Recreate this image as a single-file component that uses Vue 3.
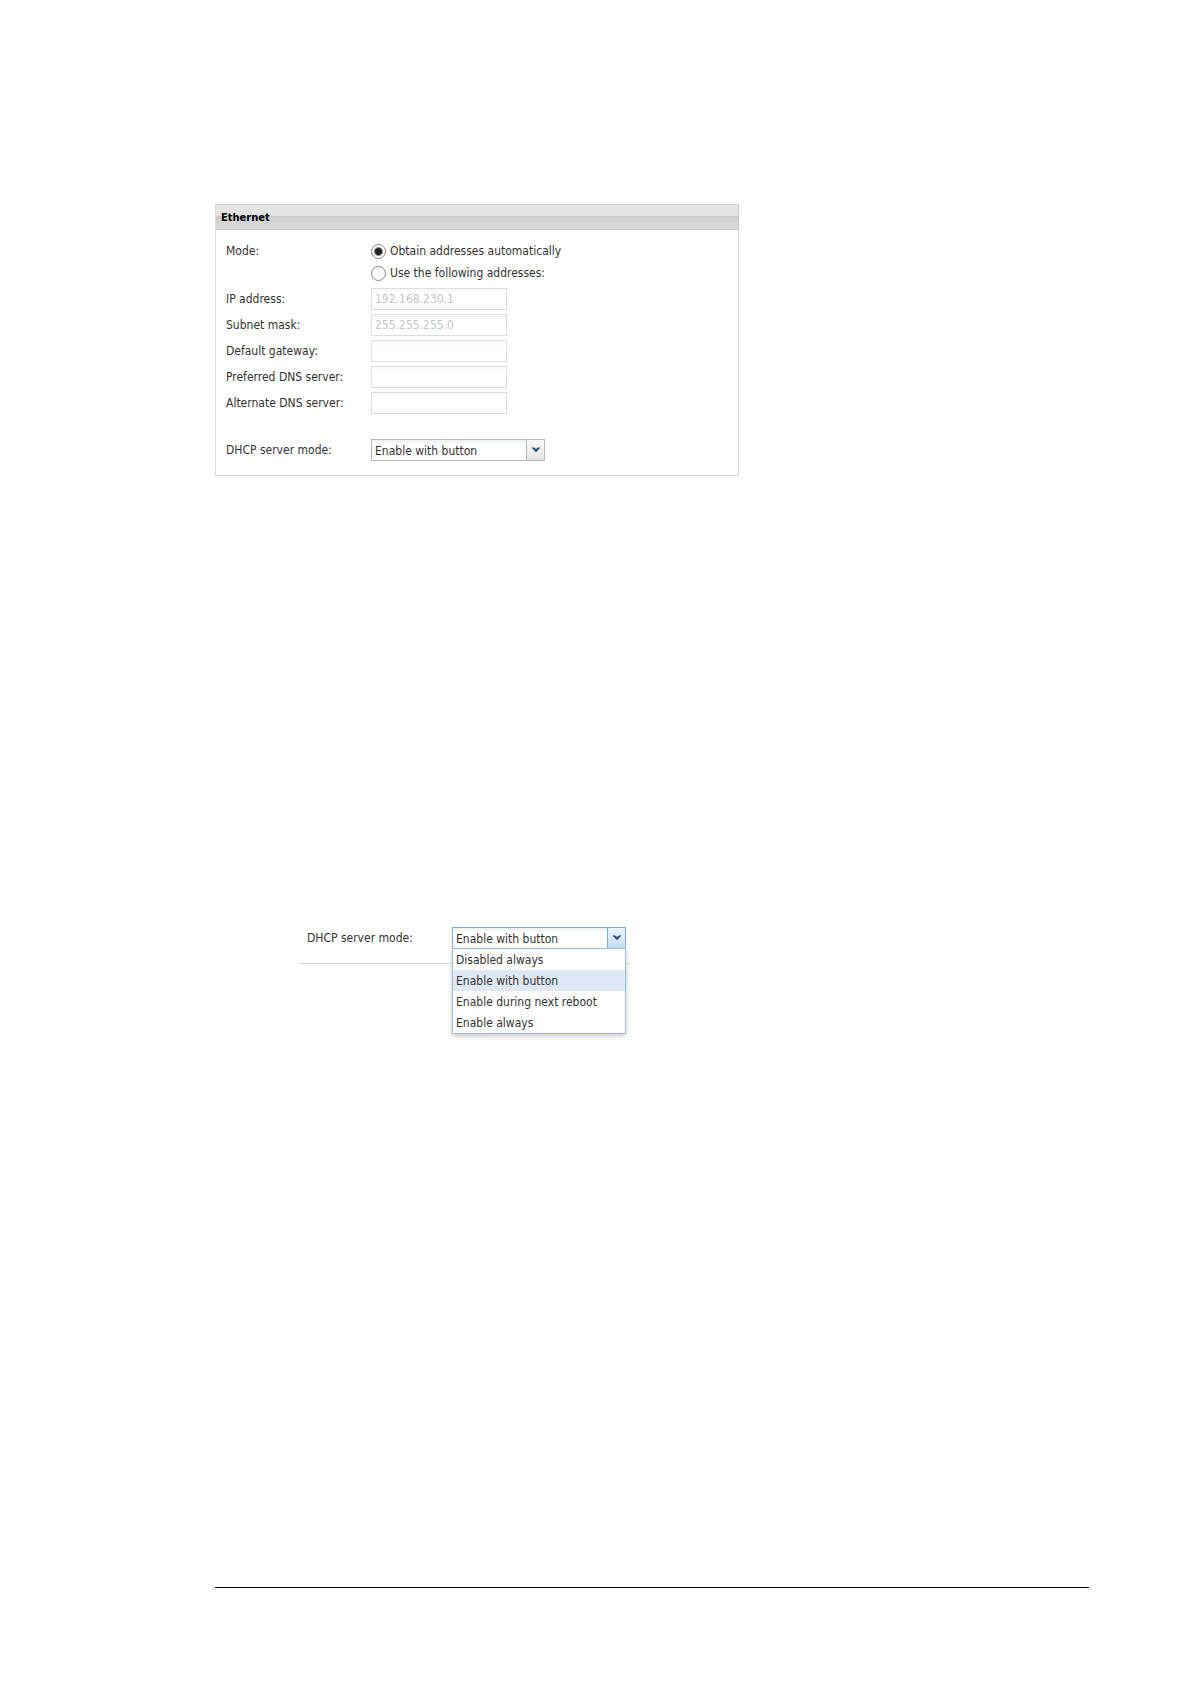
<script setup>
import { ref } from 'vue'

const mode = ref('auto')
const addresses = ref([
  { id: 'ip', label: 'IP address:', value: '192.168.230.1' },
  { id: 'mask', label: 'Subnet mask:', value: '255.255.255.0' },
  { id: 'gateway', label: 'Default gateway:', value: '' },
  { id: 'dns1', label: 'Preferred DNS server:', value: '' },
  { id: 'dns2', label: 'Alternate DNS server:', value: '' }
])
const options = ['Disabled always', 'Enable with button', 'Enable during next reboot', 'Enable always']
const dhcp = ref('Enable with button')
const dhcpOpen = ref('Enable with button')
</script>

<template>
  <main class="page">
    <section class="panel">
      <h2 class="panel-title">Ethernet</h2>
      <form class="form" @submit.prevent>
        <div class="row" role="radiogroup" aria-labelledby="mode-label">
          <span id="mode-label" class="caption">Mode:</span>
          <div class="radios">
            <label class="radio"><input v-model="mode" type="radio" name="mode" value="auto" />Obtain addresses automatically</label>
            <label class="radio"><input v-model="mode" type="radio" name="mode" value="manual" />Use the following addresses:</label>
          </div>
        </div>
        <div v-for="field in addresses" :key="field.id" class="row">
          <label class="caption" :for="field.id">{{ field.label }}</label>
          <input :id="field.id" v-model="field.value" class="text" type="text" :disabled="mode === 'auto'" />
        </div>
        <div class="row server">
          <label class="caption" for="dhcp">DHCP server mode:</label>
          <div class="combo">
            <select id="dhcp" v-model="dhcp">
              <option v-for="option in options" :key="option">{{ option }}</option>
            </select>
            <span class="trigger">
              <svg width="10" height="6" viewBox="0 0 10 6" aria-hidden="true"><path d="M0.5 0.5H3.3L5 2L6.7 0.5H9.5L5 5.3Z" /></svg>
            </span>
          </div>
        </div>
      </form>
    </section>

    <section class="detail">
      <div class="row">
        <label class="caption" for="dhcp-open">DHCP server mode:</label>
        <div class="combo open">
          <select id="dhcp-open" v-model="dhcpOpen">
            <option v-for="option in options" :key="option">{{ option }}</option>
          </select>
          <span class="trigger">
            <svg width="10" height="6" viewBox="0 0 10 6" aria-hidden="true"><path d="M0.5 0.5H3.3L5 2L6.7 0.5H9.5L5 5.3Z" /></svg>
          </span>
          <ul class="menu" role="listbox" aria-label="DHCP server mode">
            <li
              v-for="option in options"
              :key="option"
              role="option"
              :aria-selected="option === dhcpOpen"
              :class="{ selected: option === dhcpOpen }"
              @click="dhcpOpen = option"
            >{{ option }}</li>
          </ul>
        </div>
      </div>
    </section>

    <hr class="rule" />
  </main>
</template>

<style>
body {
  background: #fff;
}
</style>

<style scoped>
* {
  box-sizing: border-box;
}
.page {
  display: flex;
  flex-direction: column;
  min-height: 100vh;
  padding: 204px 101px 96px 215px;
  font: 12px/22px "DejaVu Sans Condensed", "DejaVu Sans", sans-serif;
  color: #333;
}
.panel {
  max-width: 524px;
  border: 1px solid #dcdcdc;
  border-top: 0;
}
.panel-title {
  height: 26px;
  margin: 0 -1px;
  padding: 0 5px;
  border: 1px solid #c8c8c8;
  border-left-color: #dcdcdc;
  background: linear-gradient(#f0f0f0 0, #e4e4e4 2px, #e3e3e3 11px, #c8c8c8 11px, #d2d2d2 14px, #dadada 100%);
  font-size: 11px;
  line-height: 26px;
  color: #000;
}
.form {
  display: flex;
  flex-direction: column;
  gap: 4px;
  padding: 10px 10px 14px;
}
.row {
  display: flex;
}
.caption {
  flex: 0 0 145px;
}
.radios {
  display: flex;
  flex-direction: column;
}
.radio {
  display: flex;
  align-items: center;
  gap: 4px;
}
.radio input {
  appearance: none;
  width: 15px;
  height: 15px;
  margin: 0;
  border: 1px solid #858585;
  border-radius: 50%;
  background: #fff;
}
.radio input:checked {
  background: radial-gradient(circle, #222 3px, #fff 5px);
}
.text {
  width: 136px;
  height: 22px;
  padding: 0 3px;
  border: 1px solid #dcdfe1;
  background: linear-gradient(#f5f7f8, #fff 5px);
  font: inherit;
  color: #333;
}
.text:disabled {
  color: #c4c6c8;
}
.server {
  margin-top: 21px;
}
.combo {
  position: relative;
  display: flex;
  flex: 0 0 174px;
  height: 22px;
  border: 1px solid #b5b8bb;
  background: linear-gradient(#eef2f3, #fff 5px);
}
.combo select {
  appearance: none;
  flex: 1;
  min-width: 0;
  padding: 0 3px;
  border: 0;
  background: transparent;
  font: inherit;
  color: #333;
}
.trigger {
  display: flex;
  align-items: center;
  justify-content: center;
  width: 18px;
  border-left: 1px solid #b5b8bb;
  background: linear-gradient(#f8f8f8, #e4e5e6);
  pointer-events: none;
}
.trigger path {
  fill: #304f78;
}
.detail {
  max-width: 332px;
  margin: 451px 0 0 83px;
  padding: 0 0 14px 9px;
  border-bottom: 1px solid #d8dadb;
}
.combo.open {
  border-color: #7eadd9;
}
.open .trigger {
  border-color: #7eadd9;
  background: linear-gradient(#e8f3fd, #c5def6);
}
.menu {
  position: absolute;
  top: 100%;
  left: -1px;
  right: -1px;
  margin: 0;
  padding: 0;
  border: 1px solid #98c0e3;
  background: #fff;
  box-shadow: 0 2px 5px #c8c8c8;
  list-style: none;
}
.menu li {
  height: 21px;
  padding: 0 3px;
}
.menu .selected {
  background: #dfe8f6;
}
.rule {
  width: 100%;
  margin: auto 0 0;
  border: 0;
  border-top: 1px solid #000;
}
</style>
